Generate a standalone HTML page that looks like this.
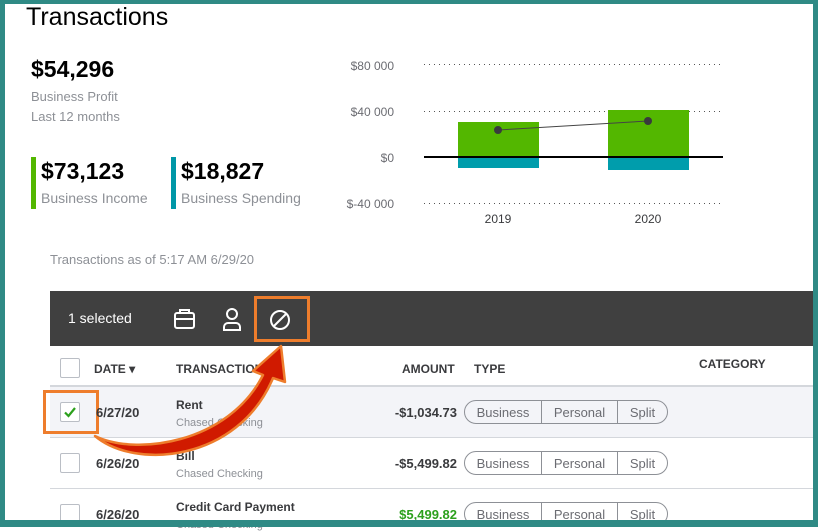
<!DOCTYPE html>
<html><head><meta charset="utf-8"><style>
*{margin:0;padding:0;box-sizing:border-box}
body{width:818px;height:527px;overflow:hidden;background:#fff;font-family:"Liberation Sans",sans-serif;position:relative}
.a{position:absolute;white-space:nowrap}
.g{color:#8d9096}
.b{font-weight:bold}
.pill{position:absolute;left:464px;width:204px;height:24px;border:1px solid #8d9096;border-radius:12px;display:flex;font-size:13px;color:#6b6c72}
.pill span{display:flex;align-items:center;justify-content:center;border-left:1px solid #8d9096}
.pill span:first-child{border-left:none;width:76px}
.pill span:nth-child(2){width:76px}
.pill span:nth-child(3){flex:1}
.cb{position:absolute;left:60px;width:20px;height:20px;border:1px solid #babec5;border-radius:2px;background:#fff}
.row{position:absolute;left:50px;width:763px;border-bottom:1px solid #d4d7dc}
.dt{position:absolute;left:96px;font-size:13px;font-weight:bold;color:#393a3d}
.tn{position:absolute;left:176px;font-size:12px;font-weight:bold;color:#393a3d}
.sub{position:absolute;left:176px;font-size:11px;color:#8d9096}
.am{position:absolute;right:361px;font-size:13px;font-weight:bold;color:#393a3d}
</style></head><body>
<div class="a" style="left:26px;top:3px;font-size:25px;color:#000">Transactions</div>
<div class="a b" style="left:31px;top:56px;font-size:23px;color:#000">$54,296</div>
<div class="a g" style="left:31px;top:89px;font-size:13px">Business Profit</div>
<div class="a g" style="left:31px;top:109px;font-size:13px">Last 12 months</div>
<div class="a" style="left:31px;top:157px;width:5px;height:52px;background:#53b700"></div>
<div class="a b" style="left:41px;top:158px;font-size:23px;color:#000">$73,123</div>
<div class="a g" style="left:41px;top:190px;font-size:14px">Business Income</div>
<div class="a" style="left:171px;top:157px;width:5px;height:52px;background:#0097a7"></div>
<div class="a b" style="left:181px;top:158px;font-size:23px;color:#000">$18,827</div>
<div class="a g" style="left:181px;top:190px;font-size:14px">Business Spending</div>
<div class="a g" style="left:50px;top:252px;font-size:13px">Transactions as of 5:17 AM 6/29/20</div>

<svg class="a" style="left:0;top:0" width="818" height="240">
<g font-family="Liberation Sans" font-size="12" fill="#6b6c72" text-anchor="end">
<text x="394" y="70">$80 000</text><text x="394" y="116">$40 000</text><text x="394" y="162">$0</text><text x="394" y="208">$-40 000</text></g>
<g stroke="#555" stroke-dasharray="1 4" stroke-width="1"><line x1="424" y1="64.5" x2="722" y2="64.5"/><line x1="424" y1="111.5" x2="722" y2="111.5"/><line x1="424" y1="203.5" x2="722" y2="203.5"/></g>
<rect x="458" y="122" width="81" height="35" fill="#53b700"/><rect x="458" y="157" width="81" height="11" fill="#009dac"/>
<rect x="608" y="110" width="81" height="47" fill="#53b700"/><rect x="608" y="157" width="81" height="13" fill="#009dac"/>
<line x1="424" y1="157" x2="723" y2="157" stroke="#000" stroke-width="2"/>
<line x1="498" y1="130" x2="648" y2="121" stroke="#444" stroke-width="1"/>
<circle cx="498" cy="130" r="4" fill="#393a3d"/><circle cx="648" cy="121" r="4" fill="#393a3d"/>
<g font-family="Liberation Sans" font-size="12" fill="#393a3d" text-anchor="middle"><text x="498" y="223">2019</text><text x="648" y="223">2020</text></g>
</svg>

<div class="a" style="left:50px;top:291px;width:763px;height:55px;background:#404040"></div>
<div class="a" style="left:68px;top:310px;font-size:14px;color:#fff">1 selected</div>
<svg class="a" style="left:170px;top:305px" width="130" height="30" fill="none" stroke="#fff" stroke-width="2">
<rect x="5" y="8" width="19" height="15" rx="2"/><path d="M10 8V5h9v3M5 14h19"/>
<circle cx="62" cy="9" r="5"/><path d="M54 25v-3a4 4 0 0 1 4-4h8a4 4 0 0 1 4 4v3z"/>
<circle cx="110" cy="15" r="9"/><path d="M104 21l12-12"/>
</svg>
<div class="a" style="left:254px;top:296px;width:56px;height:46px;border:3px solid #ee7d2c"></div>

<div class="cb" style="top:358px"></div>
<div class="a b" style="left:94px;top:362px;font-size:12px;color:#393a3d">DATE ▾</div>
<div class="a b" style="left:176px;top:362px;font-size:12px;color:#393a3d">TRANSACTION</div>
<div class="a b" style="left:402px;top:362px;font-size:12px;color:#393a3d">AMOUNT</div>
<div class="a b" style="left:474px;top:362px;font-size:12px;color:#393a3d">TYPE</div>
<div class="a b" style="left:699px;top:357px;font-size:12px;color:#393a3d">CATEGORY</div>
<div class="a" style="left:50px;top:385px;width:763px;height:2px;background:#d4d7dc"></div>

<div class="row" style="top:387px;height:51px;background:#f3f4f8"></div>
<div class="row" style="top:438px;height:51px"></div>
<div class="cb" style="top:402px"></div>
<svg class="a" style="left:60px;top:402px" width="20" height="20"><path d="M5 10.5l3.5 3.5 6.5-8" fill="none" stroke="#2ca01c" stroke-width="2.2"/></svg>
<div class="a" style="left:43px;top:390px;width:56px;height:44px;border:3px solid #ee7d2c"></div>
<div class="dt" style="top:405px">6/27/20</div><div class="tn" style="top:398px">Rent</div><div class="sub" style="top:417px">Chased Checking</div>
<div class="am" style="top:405px">-$1,034.73</div>
<div class="pill" style="top:400px"><span>Business</span><span>Personal</span><span>Split</span></div>

<div class="cb" style="top:453px"></div>
<div class="dt" style="top:456px">6/26/20</div><div class="tn" style="top:449px">Bill</div><div class="sub" style="top:468px">Chased Checking</div>
<div class="am" style="top:456px">-$5,499.82</div>
<div class="pill" style="top:451px"><span>Business</span><span>Personal</span><span>Split</span></div>

<div class="cb" style="top:504px"></div>
<div class="dt" style="top:507px">6/26/20</div><div class="tn" style="top:500px">Credit Card Payment</div><div class="sub" style="top:519px">Chased Checking</div>
<div class="am" style="top:507px;color:#2ca01c">$5,499.82</div>
<div class="pill" style="top:502px"><span>Business</span><span>Personal</span><span>Split</span></div>

<svg class="a" style="left:0;top:0" width="818" height="527">
<path d="M95 436 C135 470 238 462 273 378 L285 382 L281 346 L253 371 L263 375 C228 444 135 456 95 436Z" fill="#d01a00" stroke="#ee7d2c" stroke-width="2.5" stroke-linejoin="round"/>
</svg>

<div class="a" style="left:0;top:0;width:818px;height:4px;background:#2f8a85"></div>
<div class="a" style="left:0;top:0;width:5px;height:527px;background:#2f8a85"></div>
<div class="a" style="left:813px;top:0;width:5px;height:527px;background:#2f8a85"></div>
<div class="a" style="left:0;top:520px;width:818px;height:7px;background:#2f8a85"></div>
</body></html>
